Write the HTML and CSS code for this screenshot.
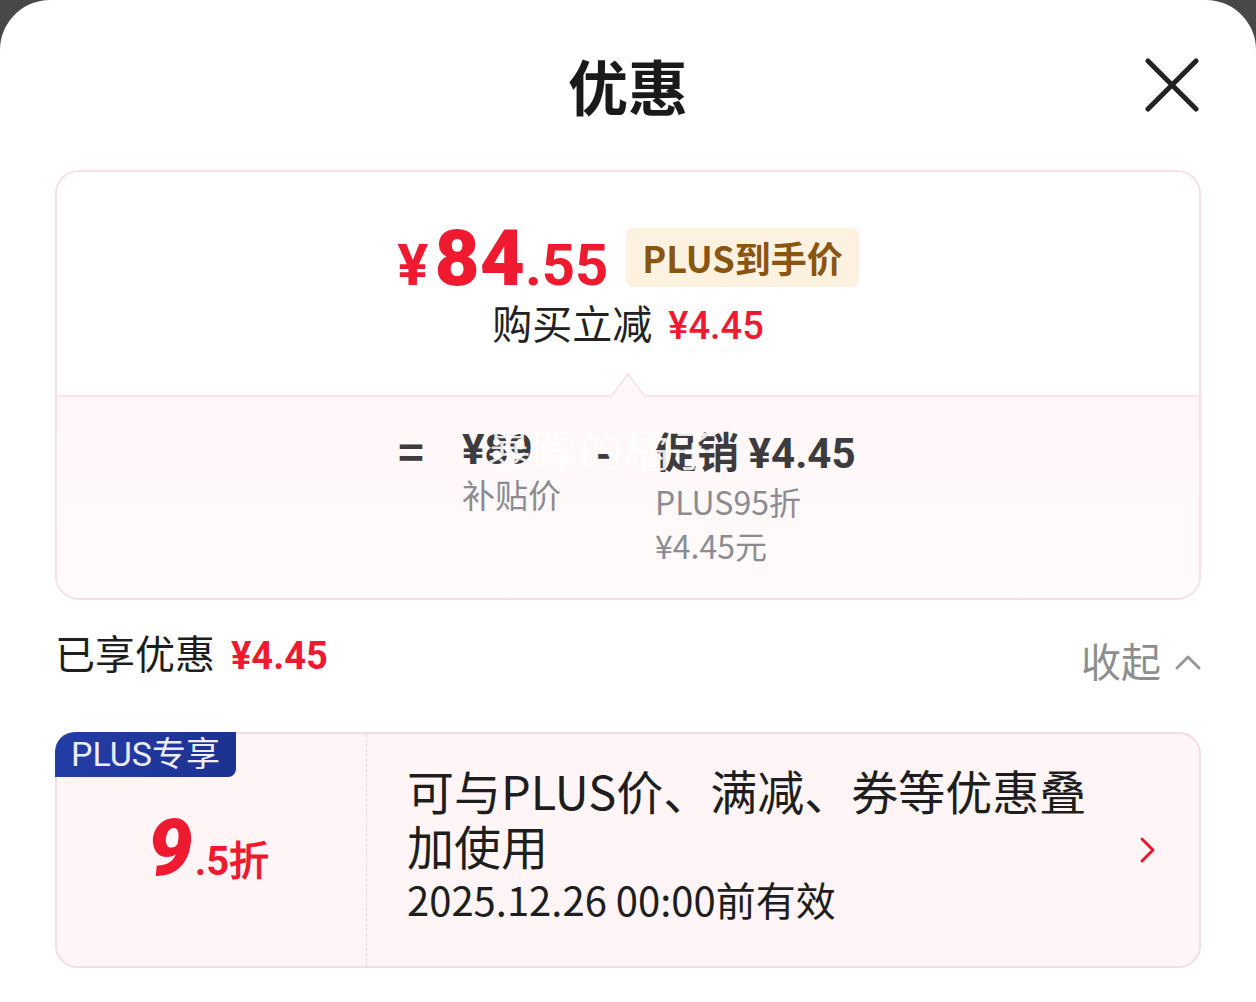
FILE: index.html
```html
<!DOCTYPE html>
<html lang="zh-CN">
<head>
<meta charset="utf-8">
<title>优惠</title>
<link rel="stylesheet" href="styles.css">
</head>
<body>
<div class="sheet">
  <header class="header">
    <span></span>
    <h1 class="title">优惠</h1>
    <button class="close" aria-label="关闭">
      <svg width="54" height="54" viewBox="0 0 54 54"><path d="M3 3 L51 51 M51 3 L3 51" stroke="#222" stroke-width="5" stroke-linecap="round" fill="none"/></svg>
    </button>
  </header>

  <section class="summary">
    <div class="summary-top">
      <div class="price-row">
        <div class="price"><span class="yen">¥</span><span class="int">84</span><span class="dec">.55</span></div>
        <div class="plus-tag">PLUS到手价</div>
      </div>
      <div class="reduce">购买立减<span class="red num">¥4.45</span></div>
    </div>
    <div class="summary-bottom">
      <svg class="notch" width="38" height="26" viewBox="0 0 38 26"><path d="M1 26 L19 2 L37 26" fill="#fff8f9" stroke="#fbe3e8" stroke-width="2"/></svg>
      <div class="formula">
        <div class="op">=</div>
        <div class="col col1">
          <div class="main num">¥89</div>
          <div class="sub">补贴价</div>
        </div>
        <div class="op minus">-</div>
        <div class="col col2">
          <div class="main">促销 <span class="num">¥4.45</span></div>
          <div class="sub2">PLUS95折</div>
          <div class="sub2">¥4.45元</div>
        </div>
        <span class="watermark">暴躁的橘子</span>
      </div>
    </div>
  </section>

  <div class="enjoyed">
    <div class="enjoyed-left">已享优惠<span class="red num bold">¥4.45</span></div>
    <div class="collapse">收起
      <svg width="26" height="20" viewBox="0 0 26 20"><path d="M2 16 L13 5 L24 16" stroke="#9a9a9a" stroke-width="3" fill="none" stroke-linecap="round" stroke-linejoin="round"/></svg>
    </div>
  </div>

  <div class="coupon">
    <div class="coupon-tag">PLUS专享</div>
    <div class="coupon-left">
      <span class="big9">9</span><span class="small5">.5折</span>
    </div>
    <div class="coupon-right">
      <div class="coupon-text">
        <div class="coupon-desc">可与PLUS价、满减、券等优惠叠加使用</div>
        <div class="coupon-date">2025.12.26 00:00前有效</div>
      </div>
      <svg class="chev" width="18" height="28" viewBox="0 0 18 28"><path d="M3 3 L14 14 L3 25" stroke="#e3192e" stroke-width="3" fill="none" stroke-linecap="round" stroke-linejoin="round"/></svg>
    </div>
  </div>
</div>
</body>
</html>
```

FILE: styles.css
```css
html, body {
  margin: 0;
  padding: 0;
}
body {
  background: #47484a;
  font-family: "Noto Sans CJK SC", "Noto Sans", sans-serif;
  color: #1e1e1e;
}
.sheet {
  background: #fff;
  border-radius: 50px 50px 0 0;
  height: 1002px;
  box-sizing: border-box;
  padding: 0 55px;
  overflow: hidden;
}
.header {
  height: 170px;
  display: grid;
  grid-template-columns: 1fr auto 1fr;
  align-items: center;
}
.title {
  margin: 0;
  font-size: 60px;
  font-weight: 700;
  color: #1a1a1a;
  line-height: 70px;
}
.close {
  justify-self: end;
  margin-right: 2px;
  background: none;
  border: 0;
  padding: 0;
  width: 54px;
  height: 54px;
  display: flex;
}
.num {
  font-family: "Roboto", "Noto Sans", sans-serif;
}
.red { color: #f01a30; }
.bold { font-weight: 700; }

.summary {
  height: 430px;
  box-sizing: border-box;
  border: 2px solid #f9dfe4;
  border-radius: 24px;
  overflow: hidden;
  display: flex;
  flex-direction: column;
}
.summary-top {
  height: 223px;
  box-sizing: border-box;
  padding-top: 56px;
  display: flex;
  flex-direction: column;
  align-items: center;
  background: #fff;
}
.price-row {
  display: flex;
  align-items: flex-start;
  gap: 18px;
  height: 80px;
}
.price {
  margin-top: -7px;
  font-family: "Roboto", sans-serif;
  font-weight: 700;
  color: #f01a30;
  line-height: 76px;
  white-space: nowrap;
}
.price .yen { font-size: 58px; margin-right: 6px; }
.price .int { font-size: 78px; font-weight: 900; }
.price .dec { font-size: 58px; }
.plus-tag {
  background: #fdf1df;
  color: #8a5411;
  font-weight: 700;
  font-size: 36px;
  height: 59px;
  line-height: 59px;
  padding: 0 16px;
  border-radius: 7px;
}
.reduce {
  margin-top: -9px;
  font-size: 40px;
  line-height: 46px;
  color: #222;
}
.reduce .num { font-weight: 500; font-size: 38px; margin-left: 16px; }

.summary-bottom {
  flex: 1;
  position: relative;
  border-top: 2px solid #fbe6ea;
  background: linear-gradient(#fff6f7, #fffafb);
}
.notch {
  position: absolute;
  top: -25px;
  left: 50%;
  margin-left: -19px;
}
.formula {
  position: relative;
  display: flex;
  align-items: flex-start;
  padding: 28px 0 0 341px;
  color: #3c3c3e;
}
.op {
  width: 64px;
  font-size: 44px;
  line-height: 50px;
  font-weight: 700;
  color: #3c3c3e;
}
.minus { width: 60px; }
.col1 { width: 133px; }
.main {
  font-size: 42px;
  line-height: 50px;
  font-weight: 700;
  white-space: nowrap;
}
.sub {
  font-size: 33px;
  line-height: 38px;
  color: #8c8c90;
}
.sub2 {
  font-size: 32px;
  line-height: 44px;
  color: #8c8c90;
}
.watermark {
  position: absolute;
  left: 430px;
  top: 26px;
  font-size: 44px;
  line-height: 50px;
  color: rgba(255, 255, 255, 0.88);
  letter-spacing: 2px;
  white-space: nowrap;
}

.enjoyed {
  margin-top: 22px;
  height: 63px;
  display: flex;
  justify-content: space-between;
  align-items: flex-start;
}
.enjoyed-left {
  font-size: 40px;
  line-height: 60px;
  color: #1e1e1e;
}
.enjoyed-left .num { font-size: 38px; margin-left: 16px; }
.collapse {
  margin-top: 8px;
  font-size: 40px;
  line-height: 60px;
  color: #8e8e8e;
  display: flex;
  align-items: center;
  gap: 14px;
}
.collapse svg { margin-top: 4px; }

.coupon {
  margin-top: 47px;
  height: 236px;
  box-sizing: border-box;
  border: 2px solid #f2dde1;
  border-radius: 22px;
  background: #fff5f6;
  position: relative;
  display: grid;
  grid-template-columns: 310px 1fr;
}
.coupon-tag {
  position: absolute;
  top: -2px;
  left: -2px;
  width: 181px;
  height: 45px;
  line-height: 45px;
  text-align: center;
  font-family: "Roboto", "Noto Sans CJK SC", sans-serif;
  font-size: 34px;
  color: #ecebf6;
  background: linear-gradient(90deg, #243da7, #1c3290);
  border-radius: 20px 0 8px 0;
}
.coupon-left {
  border-right: 1px dashed #e6d3d7;
  display: flex;
  align-items: baseline;
  justify-content: center;
  padding-top: 74px;
  padding-right: 6px;
  box-sizing: border-box;
  color: #f01a30;
  font-family: "Roboto", sans-serif;
  font-weight: 900;
}
.big9 {
  font-size: 80px;
  line-height: 80px;
  font-style: italic;
}
.small5 {
  font-size: 40px;
  font-weight: 700;
  margin-left: 2px;
}
.coupon-right {
  display: flex;
  align-items: center;
  justify-content: space-between;
  padding: 0 42px 12px 40px;
}
.coupon-text {
  width: 690px;
  color: #1e1e1e;
}
.coupon-desc {
  font-size: 47px;
  line-height: 55px;
}
.coupon-date {
  font-size: 40px;
  line-height: 55px;
}
.chev { flex: none; margin-top: 12px; }
```
